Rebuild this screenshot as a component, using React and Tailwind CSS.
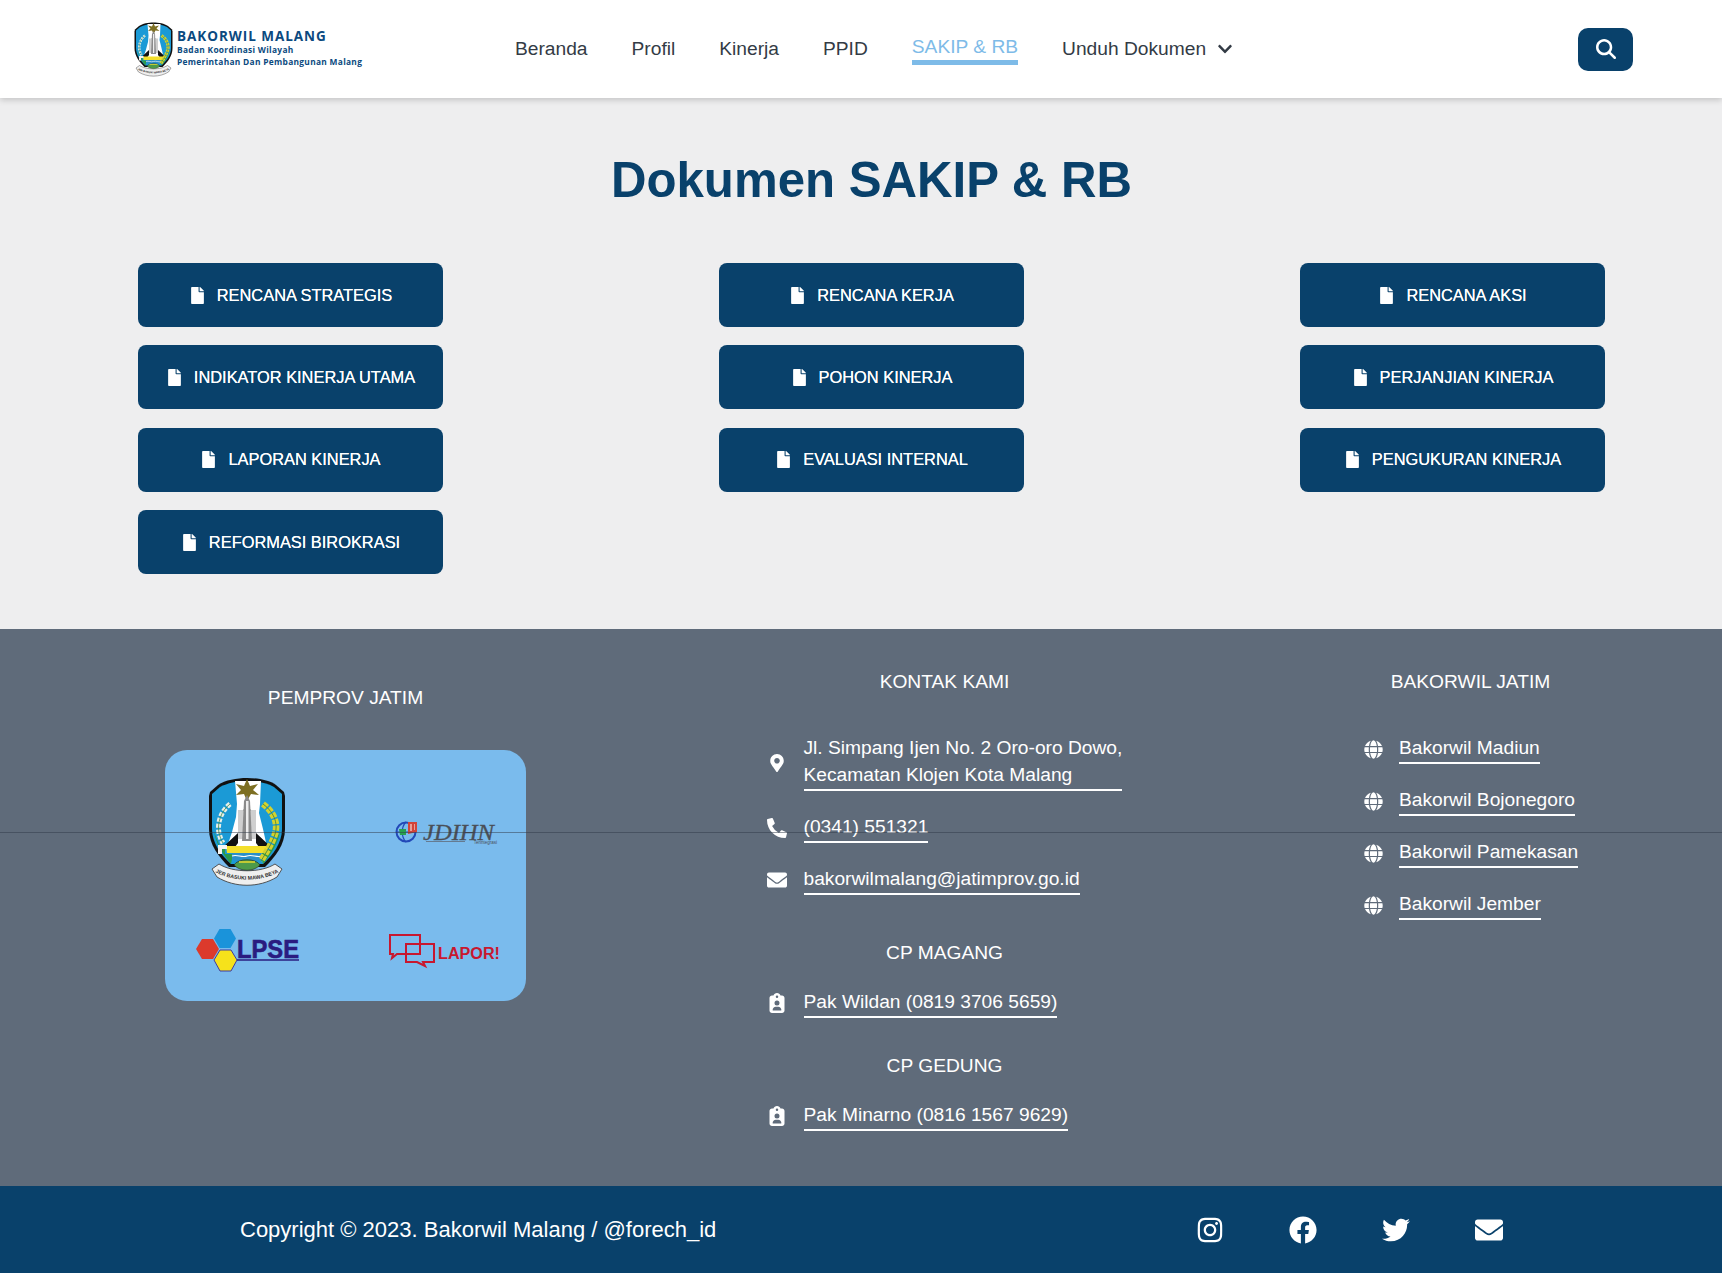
import { FaFile, FaMapMarkerAlt, FaPhoneAlt, FaEnvelope, FaGlobe, FaChevronDown, FaInstagram, FaFacebook, FaTwitter } from 'react-icons/fa'
import { FaClipboardUser, FaMagnifyingGlass } from 'react-icons/fa6'

const kolom = [
  ['RENCANA STRATEGIS', 'INDIKATOR KINERJA UTAMA', 'LAPORAN KINERJA', 'REFORMASI BIROKRASI'],
  ['RENCANA KERJA', 'POHON KINERJA', 'EVALUASI INTERNAL'],
  ['RENCANA AKSI', 'PERJANJIAN KINERJA', 'PENGUKURAN KINERJA'],
]

const bakorwil = ['Bakorwil Madiun', 'Bakorwil Bojonegoro', 'Bakorwil Pamekasan', 'Bakorwil Jember']

// Lambang Jawa Timur
function Lambang({ className }) {
  return (
    <svg viewBox="0 0 76 110" className={className}>
      <path d="M38 1C28 1 16 3 9 8L1 15 0 19V52C0 68 10 80 20 90H56C66 80 76 68 76 52V19L75 15 67 8C60 3 48 1 38 1Z" fill="#111" />
      <path d="M38 4C29 4 18 6 11 10L3 17V52C3 66 12 78 22 87H54C64 78 73 66 73 52V17L65 10C58 6 47 4 38 4Z" fill="#1b9ad6" />
      <path d="M26 4H52L51 27 50 36 54 52 58 70H18L23 55 27 40 28 27Z" fill="#fff" />
      <path d="M38 2L41 9 49 7 44 13 50 18 42 17 38 24 35 17 27 18 32 13 27 7 35 9Z" fill="#7d6f22" />
      <path d="M29 33H47V62H29Z" fill="#cfcfcf" />
      <path d="M34 33H35M41 33H42" stroke="#888" />
      <path d="M35 24L38 18 41 24 43 64H33Z" fill="#8a8a8a" />
      <path d="M37 24H39.5V62H37Z" fill="#ededed" />
      <path d="M14 70L29 56V66L26 70ZM62 70L47 56V66L50 70Z" fill="#111" />
      <path d="M17 69H59L58 76H18Z" fill="#f3df2c" />
      <path d="M5 55C7 66 13 76 22 87L24 77H16V70H11Z" fill="#2e9a4a" />
      <path d="M9 68H18V72H13V77H9Z" fill="#f4f4f4" />
      <path d="M71 55C69 66 63 76 54 87L52 77 62 72Z" fill="#2e9a4a" />
      <path d="M23 76H53V82C48 86 28 86 23 82Z" fill="#2b8fc9" />
      <path d="M23 79C28 77 33 81 38 79 43 77 48 81 53 79" stroke="#fff" strokeWidth="1.2" fill="none" />
      <path d="M21 27C12 34 8 46 10 56 11 60 12 63 14 66" stroke="#e8efe8" strokeWidth="5" strokeDasharray="4 1.8" fill="none" />
      <path d="M21 27C12 34 8 46 10 56 11 60 12 63 14 66" stroke="#3f8a4a" strokeWidth=".8" fill="none" />
      <path d="M54 27C66 36 70 48 65 60 62 68 58 74 52 84" stroke="#d4d22e" strokeWidth="6.5" strokeDasharray="5 1.5" fill="none" />
      <path d="M54 27C66 36 70 48 65 60 62 68 58 74 52 84" stroke="#47883a" strokeWidth=".9" fill="none" />
      <path d="M3 92L10 87C24 96 52 96 66 87L73 92 68 100C50 111 26 111 8 100Z" fill="#efefef" stroke="#444" strokeWidth=".9" />
      <path d="M25 88C29 81 47 81 51 88 45 95 31 95 25 88Z" fill="#4d9a4a" stroke="#222" strokeWidth=".6" />
      <path d="M30 85H46" stroke="#f3df2c" strokeWidth="1.4" />
      <path id="pita-lambang" d="M2 93C24 106 52 106 74 93" fill="none" />
      <text fontSize="5.3" fontFamily="Liberation Sans" fontWeight="700" fill="#333">
        <textPath href="#pita-lambang" startOffset="50%" textAnchor="middle">JER BASUKI MAWA BEYA</textPath>
      </text>
    </svg>
  )
}

function LogoJdihn() {
  return (
    <svg viewBox="0 0 102 24" className="ml-1 h-[24px] w-[102px] overflow-visible">
      <circle cx="11" cy="12" r="9.5" fill="none" stroke="#2349b8" strokeWidth="2" />
      <path d="M11 2C6 7 6 17 11 22M2 12H20" stroke="#2349b8" strokeWidth="1.2" fill="none" />
      <path d="M4 9H11V15H5Z" fill="#28a050" />
      <path d="M13 2H22V12L13 14Z" fill="#d2453a" />
      <path d="M15 4H17V11H15ZM19 4H20V10H19Z" fill="#e8a09a" />
      <text x="28" y="20" fontSize="24" fontFamily="Liberation Serif" fontStyle="italic" fill="#4a4f58" stroke="#4a4f58" strokeWidth=".3" textLength="71" lengthAdjust="spacingAndGlyphs">JDIHN</text>
      <path d="M31 21.5H70" stroke="#5b6068" strokeWidth=".7" />
      <text x="102" y="23.5" textAnchor="end" fontSize="4.5" fontFamily="Liberation Sans" fill="#4a4f58">Terintegrasi</text>
    </svg>
  )
}

function LogoLpse() {
  return (
    <svg viewBox="0 0 103 43" className="h-[43px] w-[103px] overflow-visible">
      <path d="M0 20L6 10H17L23 20 17 30H6Z" fill="#dc3a2c" />
      <path d="M18 9.5L23.5 0H34.5L40 9.5 34.5 19H23.5Z" fill="#1a93da" />
      <path d="M18 31L24 21H35L41 31 35 42H24Z" fill="#f6e21b" stroke="#3f3aa0" strokeWidth="1" />
      <text x="41" y="29" fontSize="25" fontFamily="Liberation Sans" fontWeight="700" fill="#2a1c80" stroke="#2a1c80" strokeWidth=".6" textLength="62" lengthAdjust="spacingAndGlyphs">LPSE</text>
      <path d="M41 31H103" stroke="#2a1c80" strokeWidth="1.4" />
    </svg>
  )
}

function LogoLapor() {
  return (
    <svg viewBox="0 0 111 33" className="h-[33px] w-[111px] overflow-visible">
      <path d="M1 1H31V20H8L3 24 4 20H1Z" fill="none" stroke="#c8172f" strokeWidth="2" />
      <path d="M17 10H45V28H34L36 32 28 28H17Z" fill="none" stroke="#c8172f" strokeWidth="2" />
      <text x="49" y="24.5" fontSize="16" fontFamily="Liberation Sans" fontWeight="700" fill="#c8172f" textLength="62" lengthAdjust="spacingAndGlyphs">LAPOR!</text>
    </svg>
  )
}

function Tombol({ label }) {
  return (
    <a className="flex h-16 w-[305px] items-center justify-center gap-[11px] rounded-lg bg-[#09416b] text-[16.4px] text-white [text-shadow:0_0_0.5px_#fff]">
      <FaFile size={17} />
      {label}
    </a>
  )
}

function Baris({ icon: Icon, size = 20, geser, children }) {
  return (
    <div className="flex items-center gap-4">
      <span className={`flex w-5 shrink-0 justify-center ${geser ? '-translate-x-px' : ''}`}><Icon size={size} /></span>
      <a className="whitespace-nowrap border-b-2 border-white pb-px leading-[27px]">{children}</a>
    </div>
  )
}

export default function App() {
  return (
    <div className="relative min-h-[1273px] bg-[#eeeeef] font-['Liberation_Sans',Arial,sans-serif]">
      {/* Header */}
      <header className="relative z-10 flex h-[98px] items-center bg-white pl-[134px] pr-[89px] shadow-[0_2px_6px_rgba(0,0,0,0.18)]">
        <div className="flex w-[381px] items-center gap-1">
          <Lambang className="h-[55px] w-[39px]" />
          <div className="-mt-[2px] font-['Open_Sans',sans-serif] font-bold text-[#0b4a80]">
            <div className="text-[13.5px] leading-[17px] tracking-[0.95px]">BAKORWIL MALANG</div>
            <div className="-mt-px text-[8.4px] leading-[12px] tracking-[0.3px]">Badan Koordinasi Wilayah</div>
            <div className="text-[8.4px] leading-[12px] tracking-[0.3px]">Pemerintahan Dan Pembangunan Malang</div>
          </div>
        </div>

        <nav className="flex items-center gap-[44px] text-[19.2px] text-[#333b45]">
          <a>Beranda</a>
          <a>Profil</a>
          <a>Kinerja</a>
          <a>PPID</a>
          <a className="mt-[2px] border-b-[5px] border-[#7ebbe8] pb-[2px] leading-[22px] text-[#7ebbe8]">SAKIP &amp; RB</a>
          <a className="flex items-center gap-[11px]">Unduh Dokumen <FaChevronDown size={16} /></a>
        </nav>

        <button className="ml-auto flex h-[43px] w-[55px] items-center justify-center rounded-[10px] bg-[#09416b] text-white">
          <FaMagnifyingGlass size={20} />
        </button>
      </header>

      {/* Dokumen */}
      <main className="pb-[55px] pl-[138px] pr-[117px] pt-[52px]">
        <h1 className="mb-[53px] text-center text-[49.2px] font-bold leading-[60px] text-[#09416b]">Dokumen SAKIP &amp; RB</h1>
        <div className="flex justify-between">
          {kolom.map((isi, i) => (
            <div key={i} className="flex flex-col gap-[18.4px]">
              {isi.map((label) => <Tombol key={label} label={label} />)}
            </div>
          ))}
        </div>
      </main>

      {/* Footer */}
      <footer className="flex h-[557px] justify-between bg-[#5f6b7a] pl-[165px] pr-[144px] text-[19.2px] text-white">
        <div className="w-[361px] pt-[55px]">
          <h3 className="text-center leading-[27px]">PEMPROV JATIM</h3>
          <div className="mt-[39px] grid h-[251px] grid-cols-[164px_164px] grid-rows-[118px_118px] gap-x-[33px] rounded-[22px] bg-[#7abbed] pt-[23px]">
            <div className="flex items-center justify-center"><Lambang className="h-[110px] w-[76px]" /></div>
            <div className="flex items-center justify-center"><LogoJdihn /></div>
            <div className="flex items-center justify-center"><LogoLpse /></div>
            <div className="flex items-center justify-center"><LogoLapor /></div>
          </div>
        </div>

        <div className="w-[354px] pt-[39px]">
          <h3 className="mb-[39px] text-center leading-[27px]">KONTAK KAMI</h3>
          <div className="flex flex-col gap-[22px]">
            <Baris icon={FaMapMarkerAlt} size={18} geser>
              Jl. Simpang Ijen No. 2 Oro-oro Dowo,<br />Kecamatan Klojen Kota Malang
            </Baris>
            <Baris icon={FaPhoneAlt} geser>(0341) 551321</Baris>
            <Baris icon={FaEnvelope} geser>bakorwilmalang@jatimprov.go.id</Baris>
          </div>
          <h3 className="mb-[22px] mt-[44px] text-center leading-[27px]">CP MAGANG</h3>
          <Baris icon={FaClipboardUser} geser>Pak Wildan (0819 3706 5659)</Baris>
          <h3 className="mb-[22px] mt-[34px] text-center leading-[27px]">CP GEDUNG</h3>
          <Baris icon={FaClipboardUser} geser>Pak Minarno (0816 1567 9629)</Baris>
        </div>

        <div className="w-[215px] pt-[39px]">
          <h3 className="mb-[39px] text-center leading-[27px]">BAKORWIL JATIM</h3>
          <div className="flex flex-col gap-[22px]">
            {bakorwil.map((nama) => <Baris key={nama} icon={FaGlobe} size={19}>{nama}</Baris>)}
          </div>
        </div>
      </footer>

      {/* Copyright */}
      <div className="flex h-[87px] items-center justify-between bg-[#09416b] pl-[240px] pr-[219px] text-white">
        <span className="text-[22px]">Copyright © 2023. Bakorwil Malang / @forech_id</span>
        <div className="flex items-center gap-[65px]">
          <FaInstagram size={28} />
          <FaFacebook size={28} />
          <FaTwitter size={28} />
          <FaEnvelope size={28} />
        </div>
      </div>

      {/* garis tipis melintang */}
      <div className="pointer-events-none absolute inset-x-0 top-[832px] h-px bg-[#2f3a48]/50" />
    </div>
  )
}
